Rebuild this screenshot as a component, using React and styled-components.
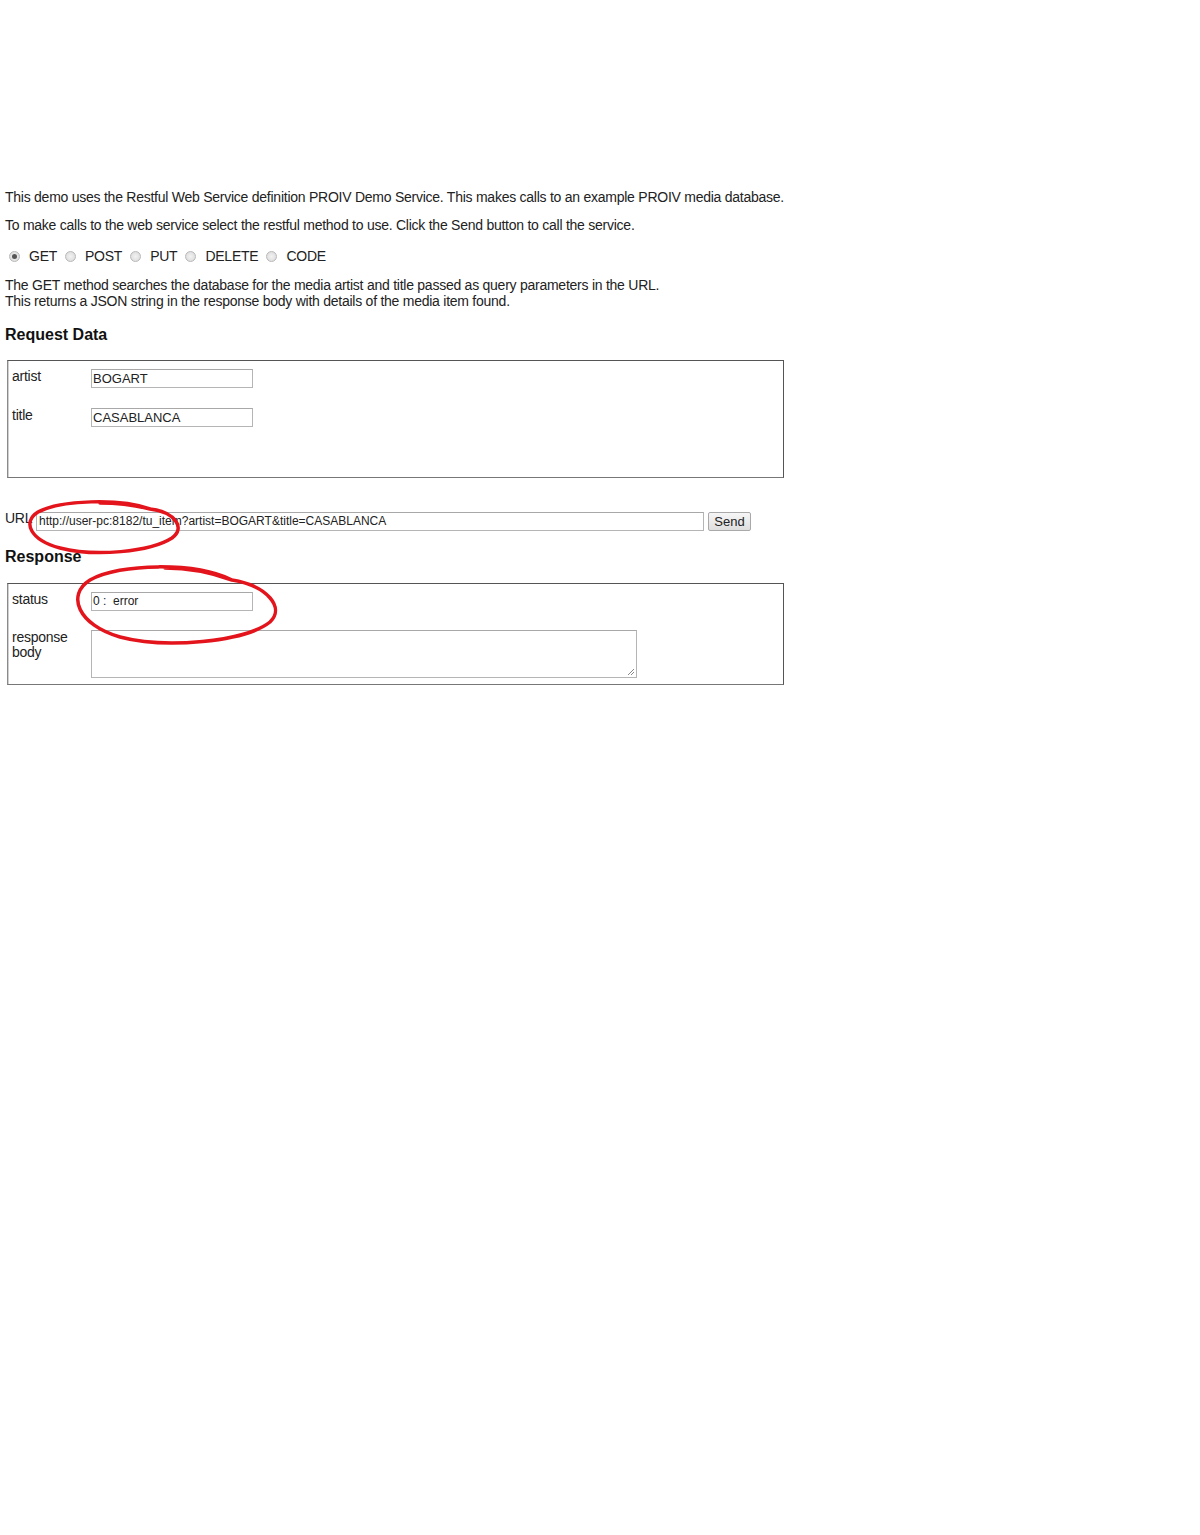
import React from "react";
import styled, { createGlobalStyle } from "styled-components";

const Global = createGlobalStyle`
  html, body { margin: 0; padding: 0; background: #fff; }
  body { font-family: "Liberation Sans", Arial, sans-serif; color: #222; }
`;

const Page = styled.div`
  position: relative;
  width: 1200px;
  min-height: 1535px;
  padding: 189px 0 0 5px;
  box-sizing: border-box;
  font-size: 14px;
  letter-spacing: -0.25px;
`;

const Para = styled.p`
  margin: 0 0 ${(p) => p.$mb || 12}px 0;
  line-height: 16px;
`;

const RadioRow = styled.div`
  display: flex;
  align-items: center;
  height: 18px;
  margin: 0 0 12px 4px;
`;

const RadioLabel = styled.label`
  display: flex;
  align-items: center;
  margin-right: 8px;
  font-size: 14px;
`;

const Dot = styled.span`
  width: 11px;
  height: 11px;
  border-radius: 50%;
  box-sizing: border-box;
  border: 1px solid #b8b8b8;
  background: radial-gradient(circle, #f2f2f2 0%, #d8d8d8 100%);
  margin-right: 9px;
  display: flex;
  align-items: center;
  justify-content: center;
  &::after {
    content: "";
    width: 5px;
    height: 5px;
    border-radius: 50%;
    background: ${(p) => (p.$on ? "#555" : "transparent")};
  }
`;

const Heading = styled.h3`
  margin: ${(p) => p.$mt || 0}px 0 0 0;
  font-size: 16px;
  font-weight: bold;
  line-height: 18px;
  letter-spacing: 0;
  color: #111;
`;

const Box = styled.div`
  margin: ${(p) => p.$mt}px 0 0 2px;
  width: 777px;
  height: ${(p) => p.$h}px;
  box-sizing: border-box;
  border: 1px solid #555;
  border-left-color: #8a8a8a;
  border-bottom-color: #777;
  box-shadow: inset 1px 0 0 #d0d0d0;
  padding: 8px 0 0 4px;
  display: grid;
  grid-template-columns: 79px auto;
  row-gap: ${(p) => p.$gap}px;
  align-content: start;
`;

const FieldLabel = styled.div`
  font-size: 14px;
  line-height: 15px;
`;

const TextField = styled.div`
  width: ${(p) => p.$w || 162}px;
  height: ${(p) => p.$h || 19}px;
  box-sizing: border-box;
  border: 1px solid #b5b5b5;
  border-top-color: #a8a8a8;
  font-size: ${(p) => p.$fs || 13}px;
  letter-spacing: 0;
  line-height: 17px;
  padding-left: ${(p) => p.$pl ?? 1}px;
  color: #222;
  white-space: pre;
  overflow: hidden;
  position: relative;
`;

const Grip = styled.svg`
  position: absolute;
  right: 1px;
  bottom: 1px;
`;

const UrlRow = styled.div`
  display: flex;
  align-items: center;
  margin-top: 33px;
  height: 20px;
`;

const UrlLabel = styled.span`
  font-size: 14px;
  width: 31px;
  align-self: flex-start;
  margin-top: -1px;
`;

const SendButton = styled.div`
  margin-left: 4px;
  width: 43px;
  height: 19px;
  box-sizing: border-box;
  border: 1px solid #a9a9a9;
  border-radius: 2px;
  background: linear-gradient(#f6f6f6, #dedede);
  font-size: 13px;
  letter-spacing: 0;
  line-height: 17px;
  text-align: center;
  color: #222;
`;

const Scribble = styled.svg`
  position: absolute;
  left: 0;
  top: 0;
  pointer-events: none;
`;

export default function App() {
  return (
    <Page>
      <Global />
      <Para>
        This demo uses the Restful Web Service definition PROIV Demo Service. This makes calls to an example PROIV media database.
      </Para>
      <Para $mb={14}>
        To make calls to the web service select the restful method to use. Click the Send button to call the service.
      </Para>
      <RadioRow>
        <RadioLabel><Dot $on />GET</RadioLabel>
        <RadioLabel><Dot />POST</RadioLabel>
        <RadioLabel><Dot />PUT</RadioLabel>
        <RadioLabel><Dot />DELETE</RadioLabel>
        <RadioLabel><Dot />CODE</RadioLabel>
      </RadioRow>
      <Para $mb={17}>
        The GET method searches the database for the media artist and title passed as query parameters in the URL.
        <br />
        This returns a JSON string in the response body with details of the media item found.
      </Para>
      <Heading>Request Data</Heading>
      <Box $mt={16} $h={118} $gap={20}>
        <FieldLabel>artist</FieldLabel>
        <TextField>BOGART</TextField>
        <FieldLabel>title</FieldLabel>
        <TextField>CASABLANCA</TextField>
      </Box>
      <UrlRow>
        <UrlLabel>URL</UrlLabel>
        <TextField $w={668} $fs={12} $pl={2}>http://user-pc:8182/tu_item?artist=BOGART&amp;title=CASABLANCA</TextField>
        <SendButton>Send</SendButton>
      </UrlRow>
      <Heading $mt={17}>Response</Heading>
      <Box $mt={17} $h={102} $gap={19}>
        <FieldLabel>status</FieldLabel>
        <TextField $fs={12}>{"0 :  error"}</TextField>
        <FieldLabel>response<br />body</FieldLabel>
        <TextField $w={546} $h={48}>
          <Grip width="8" height="8" viewBox="0 0 8 8">
            <path d="M7 1 L1 7 M7 4 L4 7" stroke="#888" strokeWidth="1" />
          </Grip>
        </TextField>
      </Box>
      <Scribble width="1200" height="1535" viewBox="0 0 1200 1535">
        <path
          d="M150 509 C 120 498, 60 500, 38 512 C 22 522, 30 540, 60 548 C 95 557, 150 552, 172 538 C 186 528, 175 512, 150 509 C 130 504, 110 503, 100 503"
          fill="none" stroke="#e3141c" strokeWidth="3.5" strokeLinecap="round"
        />
        <path
          d="M232 580 C 195 562, 120 563, 90 580 C 66 595, 78 625, 120 637 C 165 649, 245 642, 270 622 C 285 608, 268 586, 232 580 C 210 572, 185 568, 165 568"
          fill="none" stroke="#e3141c" strokeWidth="3.5" strokeLinecap="round"
        />
      </Scribble>
    </Page>
  );
}
